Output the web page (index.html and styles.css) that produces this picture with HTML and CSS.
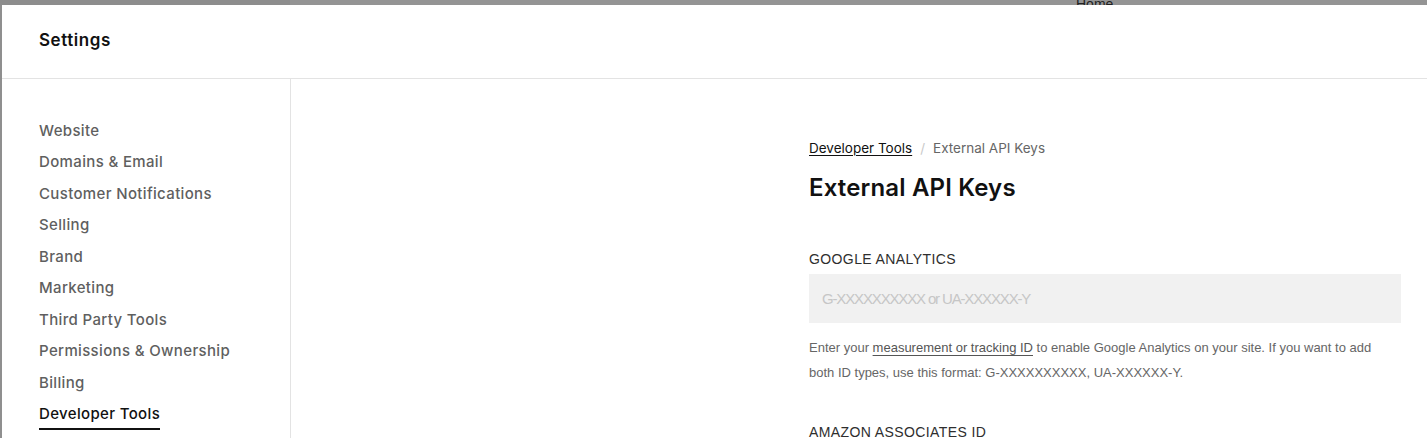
FILE: index.html
```html
<!DOCTYPE html>
<html lang="en">
<head>
<meta charset="utf-8">
<title>Settings</title>
<link rel="stylesheet" href="styles.css">
</head>
<body>
<div class="backdrop">
  <div class="backdrop-left"></div>
  <div class="backdrop-right"><span class="backdrop-home">Home</span></div>
</div>
<div class="panel">
  <header class="panel-header">
    <h1 class="panel-title">Settings</h1>
  </header>
  <div class="panel-body">
    <nav class="sidebar">
      <ul class="nav-list">
        <li class="nav-item">Website</li>
        <li class="nav-item">Domains &amp; Email</li>
        <li class="nav-item">Customer Notifications</li>
        <li class="nav-item">Selling</li>
        <li class="nav-item">Brand</li>
        <li class="nav-item">Marketing</li>
        <li class="nav-item">Third Party Tools</li>
        <li class="nav-item">Permissions &amp; Ownership</li>
        <li class="nav-item">Billing</li>
        <li class="nav-item nav-item-active"><span class="nav-active-label">Developer Tools</span></li>
      </ul>
    </nav>
    <main class="content">
      <div class="content-inner">
        <div class="breadcrumb">
          <a class="crumb-link">Developer Tools</a>
          <span class="crumb-sep">/</span>
          <span class="crumb-current">External API Keys</span>
        </div>
        <h2 class="page-title">External API Keys</h2>
        <section class="field">
          <div class="field-label">GOOGLE ANALYTICS</div>
          <div class="field-input"><span class="placeholder">G-XXXXXXXXXX or UA-XXXXXX-Y</span></div>
          <p class="field-help">Enter your <a class="help-link">measurement or tracking ID</a> to enable Google Analytics on your site. If you want to add both ID types, use this format: G-XXXXXXXXXX, UA-XXXXXX-Y.</p>
        </section>
        <section class="field">
          <div class="field-label">AMAZON ASSOCIATES ID</div>
        </section>
      </div>
    </main>
  </div>
</div>
</body>
</html>
```

FILE: styles.css
```css
* {
  box-sizing: border-box;
}

html, body {
  margin: 0;
  padding: 0;
  height: 100%;
  overflow: hidden;
}

body {
  background: #8f8f8f;
  font-family: "Inter", "Liberation Sans", sans-serif;
  position: relative;
}

.backdrop {
  position: absolute;
  left: 0;
  top: 0;
  right: 0;
  height: 5px;
  display: flex;
  overflow: hidden;
}

.backdrop-left {
  width: 290px;
  background: #8d8d8d;
}

.backdrop-right {
  flex: 1;
  background: #949494;
  position: relative;
}

.backdrop-home {
  position: absolute;
  left: 786px;
  top: -4px;
  font-size: 14px;
  line-height: 16px;
  color: #222;
  font-family: "Liberation Sans", sans-serif;
}

.panel {
  position: absolute;
  left: 2px;
  top: 5px;
  right: 0;
  bottom: 0;
  background: #fff;
  display: flex;
  flex-direction: column;
  overflow: hidden;
}

.panel-header {
  flex-shrink: 0;
  height: 74px;
  border-bottom: 1px solid #e3e3e3;
  display: flex;
  align-items: center;
  padding-left: 37px;
}

.panel-title {
  margin: 0;
  font-size: 17px;
  font-weight: 600;
  color: #111;
  letter-spacing: 0.55px;
  position: relative;
  top: -2px;
}

.panel-body {
  flex: 1;
  display: flex;
}

.sidebar {
  width: 289px;
  border-right: 1px solid #e3e3e3;
  padding-top: 36px;
  padding-left: 37px;
}

.nav-list {
  list-style: none;
  margin: 0;
  padding: 0;
}

.nav-item {
  font-size: 15px;
  font-weight: 500;
  color: #5f5f5f;
  letter-spacing: 0.35px;
  line-height: 31.44px;
  height: 31.44px;
}

.nav-item-active {
  color: #111;
}

.nav-active-label {
  display: inline-block;
  line-height: 20px;
  padding-bottom: 4px;
  border-bottom: 2px solid #111;
}

.content {
  flex: 1;
  padding-left: 518px;
}

.content-inner {
  width: 592px;
  padding-top: 60px;
}

.breadcrumb {
  font-size: 13.5px;
  line-height: 18px;
  display: flex;
  gap: 8px;
  color: #666;
}

.crumb-link {
  color: #111;
  text-decoration: underline;
  text-underline-offset: 2px;
}

.crumb-sep {
  color: #c9c9c9;
}

.crumb-current {
  color: #666;
}

.page-title {
  margin: 16px 0 0;
  font-size: 24px;
  font-weight: 600;
  color: #111;
  letter-spacing: 0.15px;
  line-height: 30px;
}

.field {
  margin-top: 47px;
}

.field + .field {
  margin-top: 38px;
}

.field-label {
  font-family: "Liberation Sans", sans-serif;
  font-size: 14px;
  color: #2e2e2e;
  letter-spacing: 0.4px;
  line-height: 18px;
}

.field-input {
  margin-top: 6px;
  height: 49px;
  background: #f1f1f1;
  display: flex;
  align-items: center;
  padding-left: 13px;
}

.placeholder {
  font-family: "Liberation Sans", sans-serif;
  font-size: 15px;
  color: #c6c6c6;
  letter-spacing: -1.15px;
}

.field-help {
  margin: 13px 0 0;
  max-width: 572px;
  font-family: "Liberation Sans", sans-serif;
  font-size: 13px;
  line-height: 24.5px;
  color: #666;
}

.help-link {
  color: #555;
  text-decoration: underline;
  text-underline-offset: 3px;
}
```
